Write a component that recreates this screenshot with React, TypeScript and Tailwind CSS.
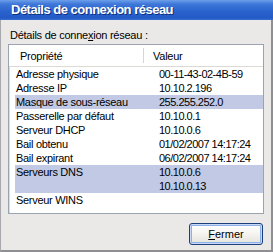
// Network connection details dialog (Windows XP style).

const FONT = { fontFamily: '"Liberation Sans", Arial, sans-serif' };

type Row = { label: string; values: string[]; selected?: boolean };

const ROWS: Row[] = [
  { label: "Adresse physique", values: ["00-11-43-02-4B-59"] },
  { label: "Adresse IP", values: ["10.10.2.196"] },
  { label: "Masque de sous-réseau", values: ["255.255.252.0"], selected: true },
  { label: "Passerelle par défaut", values: ["10.10.0.1"] },
  { label: "Serveur DHCP", values: ["10.10.0.6"] },
  { label: "Bail obtenu", values: ["01/02/2007 14:17:24"] },
  { label: "Bail expirant", values: ["06/02/2007 14:17:24"] },
  { label: "Serveurs DNS", values: ["10.10.0.6", "10.10.0.13"], selected: true },
  { label: "Serveur WINS", values: [""] },
];

export default function App() {
  return (
    <div
      className="flex h-[252px] w-[273px] flex-col text-[11px] text-black"
      style={FONT}
    >
      <div className="h-[20px] shrink-0 bg-[linear-gradient(to_bottom,#6c9fe9_0%,#3f78d9_20%,#2a63cd_55%,#2459c5_90%,#3a6fd2_100%)] pl-[11px] text-[13px] font-bold leading-[20px] tracking-[-0.5px] text-white [text-shadow:1px_1px_0_#0c2f80]">
        Détails de connexion réseau
      </div>

      <div className="flex flex-1 flex-col border-b-2 border-l border-r-2 border-b-[#8f8e93] border-l-[#a9a8ad] border-r-[#8f8e93] bg-[#ebe9e7] px-[7px]">
        <div className="mt-[8px] pl-[2px] leading-[14px] tracking-[-0.25px]">
          Détails de conne<span className="underline">x</span>ion réseau :
        </div>

        <div className="mt-[2px] h-[170px] w-[256px] border border-[#9aa3b2] bg-white shadow-[inset_1px_1px_0_#d9dde4]">
          <div className="flex h-[22px] items-center border-b border-[#dcdad3] bg-white">
            <div className="w-[134px] pl-[11px] leading-[14px] tracking-[-0.25px]">
              Propriété
            </div>
            <div className="h-[15px] w-px bg-[#d8d6d0]" />
            <div className="pl-[9px] leading-[14px] tracking-[-0.25px]">Valeur</div>
          </div>

          {ROWS.map((row) => (
            <div
              key={row.label}
              className={`ml-[6px] flex leading-[14px] ${row.selected ? "bg-[#c1c9e4]" : ""}`}
            >
              <div className="w-[144px] pl-[1px] tracking-[-0.3px]">{row.label}</div>
              <div className="flex flex-col tracking-[-0.5px]">
                {row.values.map((v, i) => (
                  <div key={i} className="h-[14px]">
                    {v}
                  </div>
                ))}
              </div>
            </div>
          ))}
        </div>

        <div className="mt-[9px] flex justify-end pr-[1px]">
          <button className="h-[22px] w-[74px] rounded-[3px] border border-[#1b3f7a] bg-[linear-gradient(to_bottom,#ffffff_0%,#f5f4f0_50%,#e4e2da_100%)] leading-[14px] text-black shadow-[inset_0_0_0_1px_#c9d8f4,inset_0_0_0_2px_#8db0e8]">
            <span className="underline">F</span>ermer
          </button>
        </div>
      </div>
    </div>
  );
}
